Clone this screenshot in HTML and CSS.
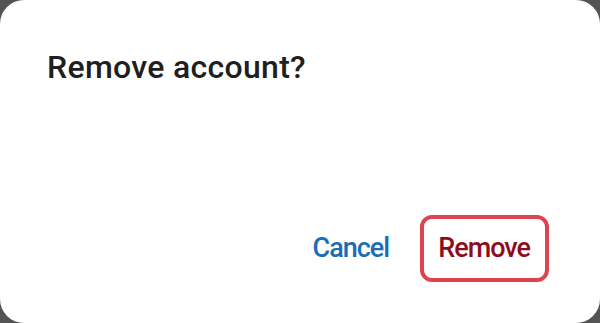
FILE: index.html
```html
<!DOCTYPE html>
<html>
<head>
<meta charset="utf-8">
<link rel="stylesheet" href="styles.css">
</head>
<body>
<div class="dialog">
  <h1 class="title">Remove account?</h1>
  <div class="actions">
    <button class="btn btn-cancel">Cancel</button>
    <button class="btn btn-remove">Remove</button>
  </div>
</div>
</body>
</html>
```
FILE: styles.css
```css
html, body {
  margin: 0;
  padding: 0;
  width: 600px;
  height: 323px;
  background: #545454;
  overflow: hidden;
}
.dialog {
  box-sizing: border-box;
  width: 600px;
  height: 323px;
  background: #ffffff;
  border-radius: 24px;
  display: flex;
  flex-direction: column;
  justify-content: space-between;
  padding: 47px 51px 41px 47px;
  font-family: Roboto, "Noto Sans", sans-serif;
}
.title {
  margin: 0;
  font-size: 32px;
  font-weight: 500;
  letter-spacing: 0.3px;
  line-height: 40px;
  color: #1f1f1f;
}
.actions {
  display: flex;
  justify-content: flex-end;
  align-items: center;
  gap: 12px;
}
.btn {
  font-family: Roboto, "Noto Sans", sans-serif;
  font-size: 27px;
  font-weight: 500;
  letter-spacing: -1px;
  line-height: 33px;
  background: transparent;
  border: 4px solid transparent;
  border-radius: 12px;
  padding: 13px 15px 13px 14px;
  cursor: pointer;
}
.btn-cancel {
  color: #1c6db3;
}
.btn-remove {
  color: #8e0c1e;
  border-color: #dc4451;
}
```
